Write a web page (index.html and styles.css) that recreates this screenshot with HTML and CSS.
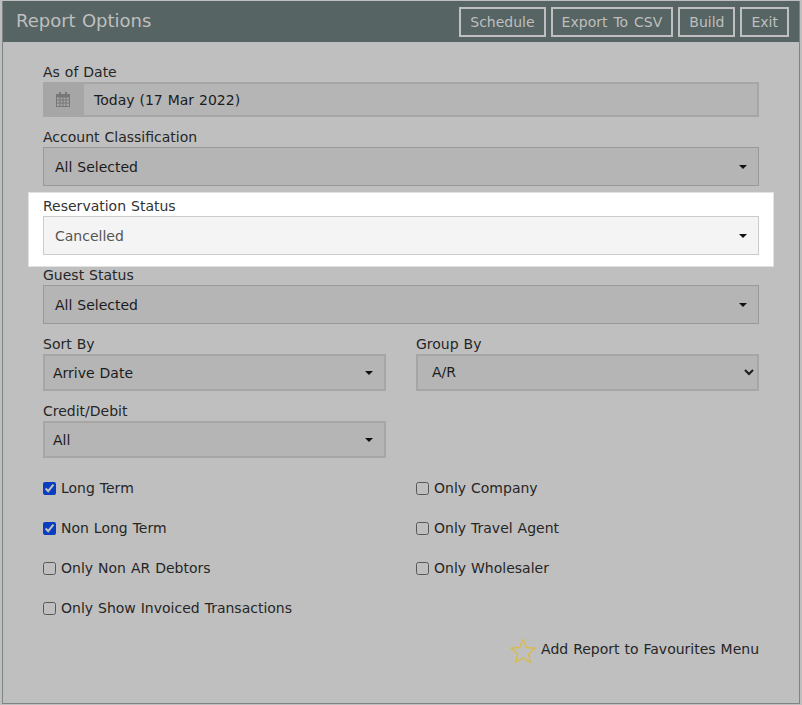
FILE: index.html
```html
<!DOCTYPE html>
<html lang="en">
<head>
<meta charset="utf-8">
<title>Report Options</title>
<link rel="stylesheet" href="styles.css">
</head>
<body>
<div class="panel">
  <header class="panel-head">
    <h1 class="panel-title">Report Options</h1>
    <div class="actions">
      <button class="btn">Schedule</button>
      <button class="btn">Export To CSV</button>
      <button class="btn">Build</button>
      <button class="btn">Exit</button>
    </div>
  </header>
  <div class="panel-body">
    <div class="field">
      <label class="label">As of Date</label>
      <div class="date-input">
        <span class="addon">
          <svg width="14" height="15" viewBox="0 0 14 15" class="cal"><path d="M3 0h2v3H3zM9 0h2v3H9z"/><path fill-rule="evenodd" d="M0 2h14v13H0zM1 5.500v2h2.500v-2zM4.500 5.500v2h2v-2zM7.500 5.500v2h2v-2zM10.500 5.500v2H13v-2zM1 8.500v2h2.500v-2zM4.500 8.500v2h2v-2zM7.500 8.500v2h2v-2zM10.500 8.500v2H13v-2zM1 11.500V14h2.500v-2.500zM4.500 11.500V14h2v-2.500zM7.500 11.500V14h2v-2.500zM10.500 11.500V14H13v-2.500z"/></svg>
        </span>
        <span class="date-value">Today (17 Mar 2022)</span>
      </div>
    </div>
    <div class="field">
      <label class="label">Account Classification</label>
      <div class="multi"><span>All Selected</span><i class="caret"></i></div>
    </div>
    <div class="field highlight">
      <label class="label">Reservation Status</label>
      <div class="multi"><span>Cancelled</span><i class="caret"></i></div>
    </div>
    <div class="field">
      <label class="label">Guest Status</label>
      <div class="multi"><span>All Selected</span><i class="caret"></i></div>
    </div>
    <div class="columns">
      <div class="field">
        <label class="label">Sort By</label>
        <div class="single"><span>Arrive Date</span><i class="caret"></i></div>
      </div>
      <div class="field">
        <label class="label">Group By</label>
        <select class="native"><option>A/R</option></select>
      </div>
      <div class="field">
        <label class="label">Credit/Debit</label>
        <div class="single"><span>All</span><i class="caret"></i></div>
      </div>
    </div>
    <div class="checks">
      <label class="check"><input type="checkbox" checked>Long Term</label>
      <label class="check"><input type="checkbox">Only Company</label>
      <label class="check"><input type="checkbox" checked>Non Long Term</label>
      <label class="check"><input type="checkbox">Only Travel Agent</label>
      <label class="check"><input type="checkbox">Only Non AR Debtors</label>
      <label class="check"><input type="checkbox">Only Wholesaler</label>
      <label class="check"><input type="checkbox">Only Show Invoiced Transactions</label>
    </div>
    <div class="favourite">
      <svg class="star" width="26" height="26" viewBox="0 0 26 26"><path d="M13 1.500l3.300 8 8.700.7-6.600 5.700 2 8.500L13 19.900l-7.400 4.500 2-8.500L1 10.200l8.700-.7z"/></svg>
      <span class="favourite-text">Add Report to Favourites Menu</span>
    </div>
  </div>
</div>
</body>
</html>
```
FILE: styles.css
```css
* { box-sizing: border-box; }
html, body { margin: 0; height: 100%; }
body {
  padding: 1px 2px 1px 2px;
  background: #bfbfbf;
  font-family: "DejaVu Sans", Verdana, sans-serif;
  font-size: 14px;
  word-spacing: .5px;
  color: #262626;
}
.panel {
  height: 703px;
  border: 1px solid #7d8684;
  border-top: 0;
  background: #bfbfbf;
}
.panel-head {
  display: flex;
  align-items: center;
  justify-content: space-between;
  height: 41px;
  padding: 0 10px 0 13px;
  background: #566463;
}
.panel-title {
  margin: 0 0 3px;
  font-size: 18px;
  font-weight: 400;
  word-spacing: .5px;
  color: #bfbfbf;
}
.actions { display: flex; gap: 5px; }
.btn {
  height: 30px;
  padding: 0 9px;
  border: 2px solid #bfbfbf;
  background: transparent;
  color: #bfbfbf;
  font: inherit;
  word-spacing: 1.500px;
}
.panel-body {
  display: flex;
  flex-direction: column;
  gap: 10px;
  padding: 20px 40px 0 40px;
}
.field { display: flex; flex-direction: column; }
.label { line-height: 20px; }
.date-input {
  display: flex;
  height: 35px;
  border: 2px solid #a6a6a6;
  background: #b5b5b5;
}
.addon {
  display: flex;
  align-items: center;
  justify-content: center;
  width: 39px;
  padding-right: 4px;
  background: #a6a6a6;
}
.cal { fill: #777; }
.date-value { padding-left: 10px; line-height: 33px; color: #1c1c1c; }
.multi, .single {
  display: flex;
  align-items: center;
  justify-content: space-between;
  background: #b5b5b5;
  color: #1c1c1c;
}
.multi { height: 39px; padding: 0 11px; border: 1px solid #999; }
.single { height: 37px; padding: 0 11px 0 8px; border: 2px solid #a6a6a6; }
.caret {
  width: 0;
  height: 0;
  border: 4px solid transparent;
  border-top-color: #111;
  border-bottom: 0;
}
.highlight {
  margin: -3px -14px -11px;
  padding: 3px 14px 11px;
  background: #fff;
  box-shadow: 0 0 0 1px #e2e2e2;
  color: #333;
  position: relative;
}
.highlight .multi { background: #f4f4f4; border-color: #ccc; color: #555; }
.columns {
  display: grid;
  grid-template-columns: 343px 343px;
  column-gap: 30px;
  row-gap: 10px;
}
.native {
  height: 37px;
  padding: 0 0 2px 10px;
  border: 2px solid #a6a6a6;
  border-radius: 0;
  background: #b5b5b5;
  color: #1c1c1c;
  font: inherit;
}
.checks {
  display: grid;
  grid-template-columns: 343px 343px;
  column-gap: 30px;
  row-gap: 20px;
  margin-top: 10px;
}
.check { display: flex; align-items: center; height: 20px; }
.check input {
  width: 13px;
  height: 13px;
  margin: 0 5px 0 0;
  accent-color: #0f52ff;
  filter: brightness(.75);
}
.favourite {
  display: flex;
  align-items: center;
  justify-content: flex-end;
  gap: 5px;
  margin-top: 10px;
}
.favourite-text { margin-bottom: 5px; }
.star { fill: none; stroke: #d8bb50; stroke-width: 1.400; }
```
